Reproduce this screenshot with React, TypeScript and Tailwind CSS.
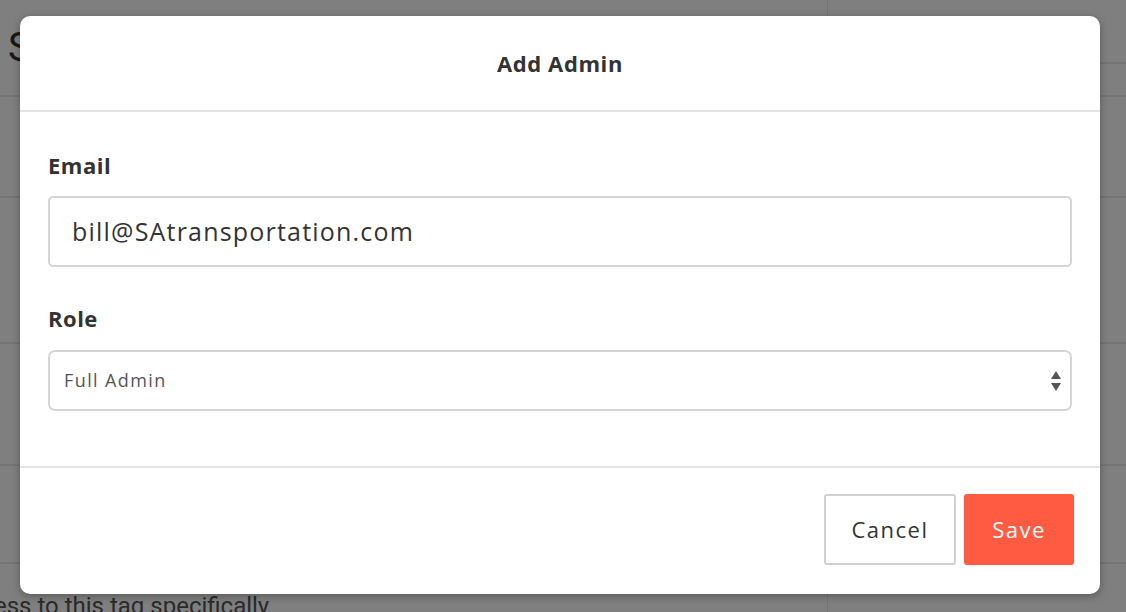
function Arrows() {
  return (
    <svg width="12" height="24" viewBox="0 0 12 24" className="shrink-0">
      <path d="M6 2 L11 10 L1 10 Z" fill="#555" />
      <path d="M1 14 L11 14 L6 22 Z" fill="#555" />
    </svg>
  );
}

function Background() {
  return (
    <div className="flex h-[612px] w-[1126px] overflow-hidden bg-white text-[#333]" style={{ fontFamily: "Roboto, sans-serif" }}>
      <div className="flex w-[828px] shrink-0 flex-col border-r border-[#e8e8e8]">
        <div className="flex h-[97px] shrink-0 items-center border-b-2 border-[#e8e8e8] pl-2 text-[40px] text-[#333]">S</div>
        <div className="h-[101px] shrink-0 border-b-2 border-[#e8e8e8]" />
        <div className="h-[146px] shrink-0 border-b-2 border-[#e8e8e8]" />
        <div className="h-[122px] shrink-0 border-b-2 border-[#e8e8e8]" />
        <div className="h-[98px] shrink-0 border-b-2 border-[#e8e8e8]" />
        <div className="-ml-[6px] shrink-0 pt-[28px] text-[24px] leading-[28px] text-[#555]">ess to this tag specifically</div>
      </div>
      <div className="flex flex-1 flex-col">
        <div className="h-[64px] shrink-0 border-b-2 border-[#e8e8e8]" />
        <div className="h-[33px] shrink-0 border-b-2 border-[#e8e8e8]" />
        <div className="h-[101px] shrink-0 border-b-2 border-[#e8e8e8]" />
        <div className="h-[146px] shrink-0 border-b-2 border-[#e8e8e8]" />
        <div className="h-[122px] shrink-0 border-b-2 border-[#e8e8e8]" />
        <div className="h-[98px] shrink-0 border-b-2 border-[#e8e8e8]" />
      </div>
    </div>
  );
}

const wide = { fontFamily: "'Open Sans', sans-serif" };

export default function App() {
  return (
    <div className="relative h-[612px] w-[1126px] overflow-hidden">
      <Background />
      <div className="absolute inset-0 bg-black/50" />
      <div
        className="absolute left-[20px] top-[16px] flex h-[578px] w-[1080px] flex-col rounded-[10px] bg-white shadow-[0_2px_8px_rgba(0,0,0,0.3)]"
        style={wide}
      >
        <div className="flex h-[96px] shrink-0 items-center justify-center border-b-2 border-[#e4e4e4]">
          <h2 className="text-[22px] font-bold tracking-[0.6px] text-[#333]">Add Admin</h2>
        </div>
        <div className="flex h-[356px] shrink-0 flex-col border-b-2 border-[#e4e4e4] px-[28px] pt-[39px]">
          <label className="text-[22px] font-bold leading-[28px] tracking-[0.5px] text-[#333]">Email</label>
          <div className="mt-[17px] flex h-[71px] items-center rounded-[5px] border-2 border-[#d5d5d5] px-[22px]">
            <span className="text-[25px] tracking-[1.2px] text-[#333]">bill@SAtransportation.com</span>
          </div>
          <label className="mt-[37px] text-[22px] font-bold leading-[28px] tracking-[0.5px] text-[#333]">Role</label>
          <div className="mt-[18px] flex h-[61px] items-center justify-between rounded-[7px] border-2 border-[#d5d5d5] pl-[14px] pr-[8px]">
            <span className="text-[18px] tracking-[1.4px] text-[#555]">Full Admin</span>
            <Arrows />
          </div>
        </div>
        <div className="flex flex-1 items-start justify-end gap-[8px] px-[26px] pt-[26px]">
          <button className="flex h-[71px] w-[132px] items-center justify-center rounded-[3px] border-2 border-[#d0d0d0] bg-white text-[22px] tracking-[1.5px] text-[#333]">
            Cancel
          </button>
          <button className="flex h-[71px] w-[110px] items-center justify-center rounded-[3px] bg-[#ff5a42] text-[22px] tracking-[1.5px] text-white">
            Save
          </button>
        </div>
      </div>
    </div>
  );
}
